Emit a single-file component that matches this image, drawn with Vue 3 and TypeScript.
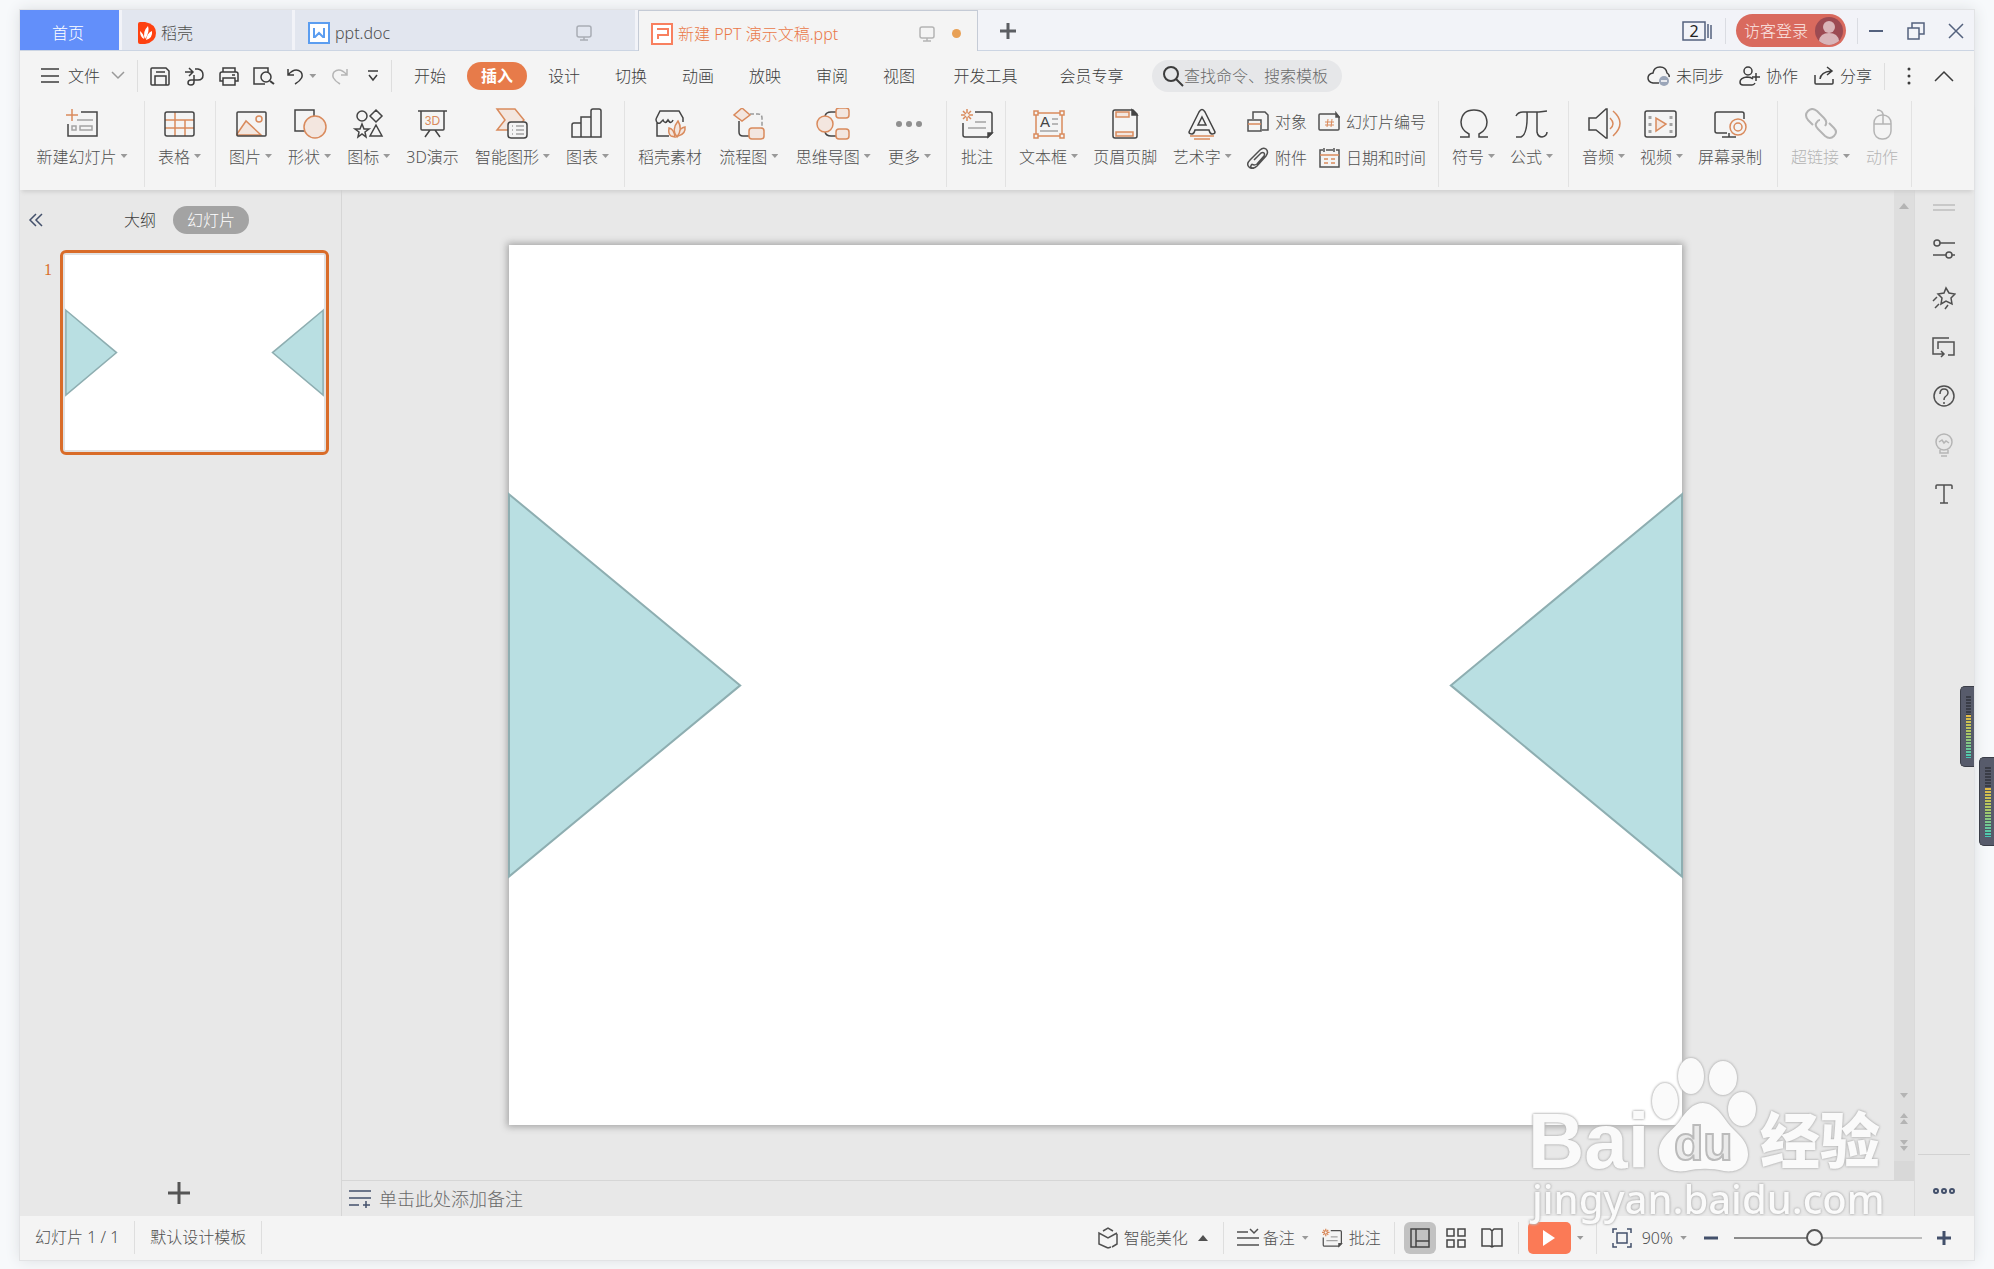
<script setup lang="ts">
import { h, ref } from 'vue'

type IconDef = [number, number, string]

const O = 'stroke="#d98a5c"'
const F = 'fill="#f3e6df"'
const G = 'stroke="#a3a3a3"'

const icons: Record<string, IconDef> = {
  newSlide: [34, 32, `<path ${O} d="M1 7h12M7 1v12"/><path d="M16 4h16v24H3V16"/><path ${G} d="M12 12h16M7 18h4v4H7zM15 18h12v4H15z"/>`],
  table: [34, 32, `<path ${O} d="M2 12h29M2 20h29M12 4v24M22 12v16"/><rect x="2" y="4" width="29" height="24" rx="2"/>`],
  picture: [34, 32, `<path ${O} ${F} d="M3 26 12 13 27 27H3z"/><circle ${O} cx="25" cy="11" r="3"/><rect x="3" y="4" width="29" height="24" rx="1"/>`],
  shape: [34, 32, `<path d="M12 23H2V2h19v8"/><circle ${O} ${F} cx="22" cy="19" r="11"/>`],
  iconSet: [34, 32, `<circle cx="10" cy="8" r="5"/><path d="m24 2 6 6-6 6-6-6zM24 17l6 11H18zM10 16l2 5h5l-4 3 1 5-4-3-4 3 1-5-4-3h5z"/>`],
  show3d: [34, 32, `<path d="M2 3h29M5 3v18q0 1 1 1h21q1 0 1-1V3M14 22l-5 7M19 22l5 7"/><text x="16.500" y="17" text-anchor="middle" font-size="12" fill="#d98a5c" stroke="none" font-family="Liberation Sans">3D</text>`],
  smart: [34, 32, `<path ${O} ${F} d="M2 1h18l9 11-9 10H2l8-10z"/><rect x="13" y="14" width="19" height="16" rx="3" fill="#f4f4f4"/><path ${G} d="M17 18h1M21 18h8M17 22h1M21 22h8M17 26h1M21 26h8"/>`],
  chart: [34, 32, `<path d="M2 29V17q0-2 2-2h7v14zM11 29V9h10v20zM21 29V3q0-2 2-2h6q2 0 2 2v26zM2 29h29"/>`],
  store: [34, 32, `<path d="M3 11 7 3h19l4 7v4M3 11q0 5 4 4l3-3q2 5 5 0 3 5 5 0M4 15v13h12"/><path ${O} ${F} d="M18 28q-3-2-2-8 5 1 6 9zM25 28q8-2 7-9-5 1-8 7z"/><path ${O} ${F} d="M24 29q-6-7 1-16 5 8-1 16z"/>`],
  flow: [34, 32, `<path d="M7 13v11q0 4 4 4h6"/><path stroke="#999" stroke-dasharray="4 2" d="M18 6h8q4 0 4 4v11"/><path ${O} ${F} d="m10 0 8 7-8 6-8-6z"/><rect ${O} ${F} x="17" y="20" width="15" height="11" rx="3"/>`],
  mind: [34, 32, `<path d="M9 8q1-4 6-4h6M9 24q1 4 6 4h6"/><circle ${O} ${F} cx="9" cy="16" r="8"/><rect ${O} ${F} x="20" y="0" width="13" height="10" rx="3"/><rect ${O} ${F} x="20" y="21" width="13" height="10" rx="3"/>`],
  more: [34, 32, `<g fill="#8f8f8f" stroke="none"><circle cx="7" cy="16" r="3"/><circle cx="17" cy="16" r="3"/><circle cx="27" cy="16" r="3"/></g>`],
  comment: [34, 32, `<path ${O} d="M7 1v4M7 9v4M1 7h4M9 7h4M3 3l3 3M11 3 8 6M3 11l3-3M11 11 8 8"/><path d="M15 4h15q2 0 2 2v19l-4 4H5q-2 0-2-2V15"/><path fill="currentColor" d="M32 25h-4v4z"/><path ${G} d="M15 14h11M8 20h18"/>`],
  textBox: [34, 32, `<path ${O} d="M4 5h26v23H4z"/><path ${O} fill="#f4f4f4" d="M2 3h4v4H2zM28 3h4v4h-4zM2 26h4v4H2zM28 26h4v4h-4z"/><text x="8" y="19" font-size="15" fill="#444" stroke="none" font-family="Liberation Sans">A</text><path ${G} d="M20 11h6M20 16h6M8 23h18"/>`],
  header: [34, 32, `<path d="M8 2h17l4 4v22q0 2-2 2H7q-2 0-2-2V4q0-2 2-2z"/><path fill="currentColor" d="M24 2v5h5z"/><path ${O} ${F} d="M8 4h13v5H8zM8 24h17v4H8z"/>`],
  wordArt: [34, 32, `<path d="M4 24 14 4q3-5 6 0l10 20q0 2-3 2-2 0-3-4H10q-1 4-3 4-3 0-3-2z"/><path d="m17 9 4 8h-8z"/><path ${O} d="M5 28h24M9 31h16"/>`],
  object: [22, 22, `<path d="M6 8V1h12l3 3v15h-6"/><path fill="#f4f4f4" d="M1 9h13v11H1z"/><path ${O} d="M1 13h13"/>`],
  slideNo: [22, 22, `<path d="M2 3h16l3 3v12q0 1-1 1H2q-1 0-1-1V4q0-1 1-1z"/><path fill="currentColor" d="M18 2v4h3z"/><path ${O} stroke-width="1" d="M10 8 9 16M14 8l-1 8M7 11h9M7 14h9"/>`],
  clip: [22, 22, `<path d="m7 13 7-7q2-1 3 0t0 3l-7 8q-3 2-5 0M5 17q-3 4 1 4 2 0 4-2l9-10q3-4 0-7-3-2-6 1L3 13q-4 4-1 7 2 2 5 1"/>`],
  calendar: [22, 22, `<path d="M5 3H2v17h19V3h-3M8 3h7M6 1v4M16 1v4"/><path ${O} d="M2 8h19M6 12h4M13 12h4M6 16h4M13 16h4"/>`],
  omega: [34, 32, `<path d="M3 29h9v-3Q4 22 4 14 5 2 17 2t13 12q0 8-8 12v3h9"/>`],
  pi: [34, 32, `<path d="M2 8q2-4 7-4h16l8-1M13 4q1 22-6 25H2M23 4v20q1 5 5 5 5-1 5-5"/>`],
  audio: [34, 32, `<path d="M2 10h7L19 1h1v29h-1L9 22H2z"/><path ${O} d="M23 10q6 6 0 11M26 3q14 12 0 25"/>`],
  video: [34, 32, `<rect x="1" y="3" width="31" height="26" rx="2"/><path ${G} stroke-width="3" stroke-dasharray="3 4" d="M6 8v17M27 8v17"/><path ${O} ${F} d="M12 10v13l10-7z"/>`],
  record: [34, 32, `<path d="M14 25H4q-2 0-2-2V6q0-2 2-2h25q2 0 2 2v5M16 25v4M9 29h14"/><circle ${O} fill="#f4f4f4" cx="25" cy="19" r="8"/><circle ${O} cx="25" cy="19" r="4"/>`],
  link: [34, 32, `<path stroke-width="2" d="M9 17 4 12Q0 7 4 3t9 0l7 7q4 4 1 8M25 15l5 5q4 4 0 8t-9 0l-7-7q-4-4-1-7 1-2 3-2"/>`],
  mouse: [34, 32, `<rect x="9" y="7" width="17" height="24" rx="8"/><path d="M9 16h17M18 16V6q-1-4-6-4"/>`],
  menu: [20, 18, `<path d="M1 2h18M1 9h18M1 15h18"/>`],
  chevDown: [14, 10, `<path d="m1 1 6 6 6-6"/>`],
  chevUp: [22, 14, `<path d="m2 12 9-9 9 9"/>`],
  save: [20, 20, `<path d="M2 2h14l3 3v13q0 1-1 1H2q-1 0-1-1V3q0-1 1-1zM5 19v-9h11v9M6 6h9"/>`],
  exportPdf: [20, 20, `<path d="M1 6h7M5 2l4 4-4 4M11 3h3q5 1 5 6t-5 5H7q-3 0-3 3 0 2 3 2 3 0 3-3V9"/>`],
  print: [20, 20, `<path d="M4 6V2h12v4M4 15H1V8q0-2 2-2h14q2 0 2 2v7h-3M4 12h12v7H4zM13 9h3"/>`],
  preview: [22, 20, `<path d="M12 18H1V2h14v4"/><circle cx="13" cy="11" r="5"/><path stroke-width="2" d="m17 15 4 3"/>`],
  undo: [18, 20, `<path d="M2 3v6h6M2 9q7-8 13-3 4 6-6 12"/>`],
  redo: [18, 20, `<path d="M16 3v6h-6M16 9Q9 1 3 6q-4 6 6 12"/>`],
  overflow: [12, 12, `<path d="M1 1h10M2 5l4 5 4-5"/>`],
  search: [22, 22, `<circle cx="9" cy="9" r="7" stroke-width="2"/><path stroke-width="2" d="m14 14 7 7"/>`],
  cloud: [24, 22, `<path d="M12 18H6q-5-1-5-5t5-5q1-6 7-6t7 6q3 2 2 4"/><circle cx="17" cy="16" r="5" fill="#9aa5b8" stroke="none"/><path stroke="#fff" d="M14 16h6"/>`],
  collab: [22, 20, `<circle cx="9" cy="5" r="4"/><path d="M14 13q-2-2-6-2-7 1-7 5 0 3 3 3h9q2 0 3-2M17 7v8M13 11h8"/>`],
  share: [22, 20, `<path d="M2 9v8q0 1 1 1h16q1 0 1-1v-4M7 13q1-7 11-8M14 1l5 4-5 4"/>`],
  dots: [6, 20, `<g fill="currentColor" stroke="none"><circle cx="3" cy="3" r="1.500"/><circle cx="3" cy="10" r="1.500"/><circle cx="3" cy="17" r="1.500"/></g>`],
  flame: [18, 22, `<path fill="#fe4110" stroke="none" d="M2 0h5q11 2 11 11T7 22H2q-2 0-2-2V2q0-2 2-2z"/><path fill="#fff" stroke="none" d="M7 17q-3-7 3-13 2 6-3 13zM6 17q-4-2-4-8 4 3 4 8zM8 18q7-2 6-9-5 2-6 9z"/>`],
  writer: [22, 22, `<rect x="1" y="1" width="20" height="20" fill="#fff" stroke="#5b9df0" stroke-width="2"/><path stroke="#5b9df0" stroke-width="2" d="M6 6v9h1l4-4 4 4h1V6"/>`],
  slides: [22, 22, `<rect x="1" y="1" width="20" height="20" fill="#fff" stroke="#f8805f" stroke-width="2"/><path stroke="#f8805f" stroke-width="2" d="M6 6h11v6H7v4"/>`],
  monitor: [16, 18, `<rect x="1" y="2" width="14" height="11" rx="2"/><path d="M8 13v3M4 16h8"/>`],
  plusBold: [18, 18, `<path stroke-width="3" d="M1 9h16M9 1v16"/>`],
  plusBig: [22, 22, `<path stroke-width="3" d="M0 11h22M11 0v22"/>`],
  stack: [32, 22, `<path d="M1 2h22v18H1zM26 4v14M29 5v14"/>`],
  avatar: [28, 28, `<circle cx="14" cy="14" r="14" fill="#9c4a52" stroke="none"/><g fill="#d9b4b8" stroke="none"><circle cx="14" cy="10" r="6"/><path d="M4 24q1-8 10-8t10 8q-10 8-20 0z"/></g>`],
  minimize: [16, 16, `<path stroke-width="2" d="M1 8h14"/>`],
  restore: [18, 18, `<path d="M1 6h11v11H1zM5 6V1h12v11h-5"/>`],
  close: [16, 16, `<path d="m1 1 14 14M15 1 1 15"/>`],
  collapse: [16, 16, `<path d="M8 2 2 8l6 6M14 2 8 8l6 6"/>`],
  grip: [22, 8, `<path stroke="#bdbdbd" d="M0 1h22M0 6h22"/>`],
  sliders: [22, 22, `<circle cx="4" cy="5" r="3"/><path d="M7 5h15M0 17h13M19 17h3"/><circle cx="16" cy="17" r="3"/>`],
  star: [24, 24, `<path d="m14 2 3 5 6 1-4 4 1 6-6-3-5 3 1-6-4-4 6-1zM5 11l-4 4M7 18l-4 4M16 19l-3 4"/>`],
  swap: [24, 22, `<path d="M17 2H1v16h11M9 15l3 3-3 3M6 13V6h16v13h-6"/>`],
  help: [22, 22, `<circle cx="11" cy="11" r="10"/><path d="M7 9q0-5 4-5t4 4q0 2-3 4-1 1-1 3M11 17v2"/>`],
  bulb: [22, 24, `<circle cx="11" cy="9" r="8"/><path d="M7 17v3h8v-3M8 23h6M6 9l3-2 2 3 2-2 3 2"/>`],
  typeT: [22, 22, `<path d="M3 6V3q0-1 1-1h14q1 0 1 1v3M11 2v18M7 20h8"/>`],
  rings: [24, 8, `<g stroke-width="2"><circle cx="4" cy="4" r="2"/><circle cx="12" cy="4" r="2"/><circle cx="20" cy="4" r="2"/></g>`],
  notes: [22, 20, `<path d="M0 2h22M0 9h22M0 16h10M14 16h7M17 12v7"/>`],
  cube: [22, 22, `<path d="m6 4 5-3 5 3M20 7v10l-5 3M11 21l-9-4V6l9 5 9-5M11 21l3-1"/>`],
  remark: [22, 20, `<path d="M0 4h11M0 10h22M0 17h22M13 1l4 4 4-4"/>`],
  viewNormal: [20, 20, `<path d="M1 1h18v18H1zM6 1v18M6 13h13"/>`],
  viewGrid: [20, 20, `<path d="M1 1h7v7H1zM12 1h7v7h-7zM1 12h7v7H1zM12 12h7v7h-7z"/>`],
  viewBook: [22, 20, `<path d="M1 1h8l2 2 2-2h8v17h-8l-2 1-2-1H1zM11 3v16"/>`],
  play: [14, 18, `<path fill="#fff" stroke="none" d="M1 1v16l12-8z"/>`],
  fit: [20, 20, `<path d="M1 5V1h4M15 1h4v4M19 15v4h-4M5 19H1v-4M5 5h10v10H5z"/>`],
  minusBold: [14, 14, `<path stroke-width="3" d="M0 7h14"/>`],
  plusZoom: [14, 14, `<path stroke-width="3" d="M0 7h14M7 0v14"/>`],
  triUp: [10, 8, `<path fill="currentColor" stroke="none" d="M0 7h10L5 1z"/>`],
  dblUp: [10, 12, `<path fill="currentColor" stroke="none" d="M1 5h8L5 0zM1 11h8L5 6z"/>`],
  dblDown: [10, 12, `<path fill="currentColor" stroke="none" d="M1 1h8L5 6zM1 7h8l-4 5z"/>`],
  triDown: [10, 6, `<path fill="currentColor" stroke="none" d="M1 0h8L5 5z"/>`],
}

const Icon = (props: { name: string }) => {
  const [w, ht, body] = icons[props.name]
  return h('svg', {
    width: w, height: ht, viewBox: `0 0 ${w} ${ht}`,
    fill: 'none', stroke: 'currentColor', 'stroke-width': 1.5,
    'aria-hidden': 'true', innerHTML: body,
  })
}
Icon.props = ['name']

interface Tool { icon: string; label: string; menu?: boolean }
interface Group { id: string; tools: Tool[]; small?: Tool[]; disabled?: boolean }

const groups: Group[] = [
  { id: 'new', tools: [{ icon: 'newSlide', label: '新建幻灯片', menu: true }] },
  { id: 'table', tools: [{ icon: 'table', label: '表格', menu: true }] },
  { id: 'art', tools: [
    { icon: 'picture', label: '图片', menu: true },
    { icon: 'shape', label: '形状', menu: true },
    { icon: 'iconSet', label: '图标', menu: true },
    { icon: 'show3d', label: '3D演示' },
    { icon: 'smart', label: '智能图形', menu: true },
    { icon: 'chart', label: '图表', menu: true },
  ] },
  { id: 'docer', tools: [
    { icon: 'store', label: '稻壳素材' },
    { icon: 'flow', label: '流程图', menu: true },
    { icon: 'mind', label: '思维导图', menu: true },
    { icon: 'more', label: '更多', menu: true },
  ] },
  { id: 'note', tools: [{ icon: 'comment', label: '批注' }] },
  { id: 'text', tools: [
    { icon: 'textBox', label: '文本框', menu: true },
    { icon: 'header', label: '页眉页脚' },
    { icon: 'wordArt', label: '艺术字', menu: true },
  ], small: [
    { icon: 'object', label: '对象' },
    { icon: 'slideNo', label: '幻灯片编号' },
    { icon: 'clip', label: '附件' },
    { icon: 'calendar', label: '日期和时间' },
  ] },
  { id: 'symbol', tools: [
    { icon: 'omega', label: '符号', menu: true },
    { icon: 'pi', label: '公式', menu: true },
  ] },
  { id: 'media', tools: [
    { icon: 'audio', label: '音频', menu: true },
    { icon: 'video', label: '视频', menu: true },
    { icon: 'record', label: '屏幕录制' },
  ] },
  { id: 'links', disabled: true, tools: [
    { icon: 'link', label: '超链接', menu: true },
    { icon: 'mouse', label: '动作' },
  ] },
]

const menus = ['开始', '插入', '设计', '切换', '动画', '放映', '审阅', '视图', '开发工具', '会员专享']
const activeMenu = ref('插入')
const rail = ['sliders', 'star', 'swap', 'help', 'bulb', 'typeT']
const zoom = ref(42)
</script>

<template>
  <div class="desktop">
    <div class="window">
      <header class="titlebar">
        <nav class="tabs">
          <button class="tab home">首页</button>
          <button class="tab docer"><Icon name="flame" />稻壳</button>
          <button class="tab doc"><Icon name="writer" />ppt.doc<Icon name="monitor" class="mon" /></button>
          <button class="tab doc active"><Icon name="slides" />新建 PPT 演示文稿.ppt<Icon name="monitor" class="mon" /><i class="dirty"></i></button>
          <button class="add" aria-label="新建"><Icon name="plusBold" /></button>
        </nav>
        <div class="sys">
          <button class="stack" aria-label="窗口"><Icon name="stack" /><b>2</b></button>
          <i class="sep"></i>
          <button class="login">访客登录<Icon name="avatar" /></button>
          <i class="sep"></i>
          <button aria-label="最小化"><Icon name="minimize" /></button>
          <button aria-label="还原"><Icon name="restore" /></button>
          <button aria-label="关闭"><Icon name="close" /></button>
        </div>
      </header>

      <div class="menubar">
        <button class="file"><Icon name="menu" />文件<Icon name="chevDown" class="faint" /></button>
        <div class="quick">
          <button aria-label="保存"><Icon name="save" /></button>
          <button aria-label="输出"><Icon name="exportPdf" /></button>
          <button aria-label="打印"><Icon name="print" /></button>
          <button aria-label="打印预览"><Icon name="preview" /></button>
          <button class="undo" aria-label="撤销"><Icon name="undo" /><i class="caret"></i></button>
          <button class="light" aria-label="恢复"><Icon name="redo" /></button>
          <button class="last" aria-label="更多命令"><Icon name="overflow" /></button>
        </div>
        <nav class="menus">
          <button v-for="m in menus" :key="m" :class="{ on: m === activeMenu, wide: m.length > 2 }" @click="activeMenu = m">{{ m }}</button>
        </nav>
        <label class="search"><Icon name="search" /><input type="text" placeholder="查找命令、搜索模板" aria-label="查找命令" /></label>
        <div class="account">
          <button><Icon name="cloud" />未同步</button>
          <button><Icon name="collab" />协作</button>
          <button><Icon name="share" />分享</button>
          <i class="line"></i>
          <button class="kebab" aria-label="更多"><Icon name="dots" /></button>
          <button aria-label="收起"><Icon name="chevUp" /></button>
        </div>
      </div>

      <div class="ribbon">
        <section v-for="g in groups" :key="g.id" class="group" :class="['g-' + g.id, { off: g.disabled }]">
          <button v-for="t in g.tools" :key="t.label" class="tool" :disabled="g.disabled">
            <Icon :name="t.icon" />
            <span>{{ t.label }}<i v-if="t.menu" class="caret"></i></span>
          </button>
          <div v-if="g.small" class="small">
            <button v-for="t in g.small" :key="t.label"><Icon :name="t.icon" />{{ t.label }}</button>
          </div>
        </section>
      </div>

      <main class="body">
        <aside class="side">
          <div class="side-head">
            <button aria-label="收起"><Icon name="collapse" class="navy" /></button>
            <button class="outline">大纲</button>
            <button class="pill">幻灯片</button>
          </div>
          <div class="thumb-row">
            <span class="num">1</span>
            <button class="thumb" aria-label="幻灯片 1">
              <svg viewBox="0 0 1172 879" preserveAspectRatio="none">
                <path d="M4 249 233 440 4 631zM1168 249 939 440l229 191z" />
              </svg>
            </button>
          </div>
          <button class="add-slide" aria-label="新建幻灯片"><Icon name="plusBig" /></button>
        </aside>

        <div class="center">
          <div class="stage">
            <div class="canvas">
              <svg class="slide" viewBox="0 0 1172 879" preserveAspectRatio="none">
                <path d="M0 249 231 440 0 631zM1172 249 941 440l231 191z" />
              </svg>
            </div>
            <div class="scroll">
              <Icon name="triUp" />
              <Icon name="triDown" class="push" />
              <Icon name="dblUp" />
              <Icon name="dblDown" />
              <i class="foot"></i>
            </div>
          </div>
          <label class="notes"><Icon name="notes" class="navy" /><input type="text" placeholder="单击此处添加备注" aria-label="备注" /></label>
        </div>

        <aside class="rail">
          <Icon name="grip" />
          <button v-for="r in rail" :key="r" :class="{ light: r === 'bulb' }" :aria-label="r"><Icon :name="r" /></button>
          <button class="rail-more" aria-label="更多"><Icon name="rings" class="navy" /></button>
        </aside>
      </main>

      <footer class="status">
        <span class="cell">幻灯片 1 / 1</span>
        <span class="cell">默认设计模板</span>
        <div class="tools">
          <button class="beauty"><Icon name="cube" />智能美化<Icon name="triUp" class="up" /></button>
          <i class="line"></i>
          <button class="remark"><Icon name="remark" />备注<i class="caret"></i></button>
          <button class="annot"><svg class="mini" width="22" height="20" viewBox="0 0 34 32" fill="none" stroke="currentColor" stroke-width="2" v-html="icons.comment[2]"></svg>批注</button>
          <i class="line"></i>
          <button class="view on" aria-label="普通视图"><Icon name="viewNormal" /></button>
          <button class="view" aria-label="幻灯片浏览"><Icon name="viewGrid" /></button>
          <button class="view" aria-label="阅读视图"><Icon name="viewBook" /></button>
          <i class="line"></i>
          <button class="play" aria-label="放映"><Icon name="play" /></button>
          <i class="caret"></i>
          <i class="line"></i>
          <button class="fit" aria-label="适应窗口"><Icon name="fit" class="navy" /></button>
          <button class="pct">90%<i class="caret"></i></button>
          <button class="navy" aria-label="缩小"><Icon name="minusBold" /></button>
          <input v-model.number="zoom" class="range" type="range" min="0" max="100" aria-label="缩放" />
          <button class="navy" aria-label="放大"><Icon name="plusZoom" /></button>
        </div>
      </footer>
      <div class="meter inner"><i class="idle"></i><i class="level"></i></div>
    </div>
    <div class="meter outer"><i class="idle"></i><i class="level"></i></div>

    <svg class="mark" width="364" height="190" viewBox="0 0 364 190" aria-hidden="true">
      <g fill="#fafafa">
        <text class="bai" x="1" y="116" font-size="78">Bai</text>
        <path d="M176 51c10 0 17 9 24 19 8 11 21 17 21 32 0 14-13 19-24 17-13-3-25-3-38 0-14 2-27-3-27-19 0-14 12-20 20-30 7-11 14-19 24-19z" />
        <ellipse cx="138" cy="49" rx="13" ry="18" />
        <ellipse cx="164" cy="24" rx="13" ry="18" />
        <ellipse cx="196" cy="26" rx="14" ry="17" />
        <ellipse cx="215" cy="57" rx="14" ry="17" />
        <text class="jy" x="233" y="111" font-size="60">经验</text>
        <text class="url" x="5" y="162" font-size="40">jingyan.baidu.com</text>
      </g>
      <text class="du" x="147" y="108" font-size="48">du</text>
    </svg>
  </div>
</template>

<style>
html, body { margin: 0; background: #f7f9fb; }
</style>

<style scoped>
.desktop {
  position: relative;
  box-sizing: border-box;
  min-height: 100vh;
  padding: 10px 20px;
  display: flex;
  overflow: hidden;
  background: #f7f9fb;
  color: #505050;
  font: 300 16px/24px "Noto Sans", "Noto Sans CJK SC", sans-serif;
}
.desktop * { box-sizing: border-box; }
button, input { font: inherit; color: inherit; border: 0; background: none; padding: 0; margin: 0; outline: 0; }
button { display: flex; align-items: center; white-space: nowrap; flex: none; }
svg { flex: none; display: block; }
i { flex: none; }
.window {
  position: relative;
  flex: 1;
  min-width: 0;
  display: flex;
  flex-direction: column;
  background: #f4f4f4;
  box-shadow: 0 0 0 1px #e2e3e5, 0 0 14px #d9dcdf;
}
.caret {
  display: inline-block;
  width: 7px;
  height: 4px;
  background: #999;
  clip-path: polygon(0 0, 100% 0, 50% 100%);
}
.navy { color: #43506b; }
.light { color: #b5b5b5; }
.faint { color: #999; }
.line { width: 1px; height: 32px; background: #dedede; }

.titlebar { display: flex; height: 41px; background: #f2f3f8; border-bottom: 1px solid #ccd5e3; }
.tabs { display: flex; flex: 1; gap: 3px; height: 41px; }
.tab { height: 40px; background: #e2e6ef; gap: 5px; padding: 5px 16px 0; color: #505050; }
.home { width: 99px; justify-content: center; background: #628ffa; color: #fff; padding: 5px 3px 0 0; }
.docer { width: 170px; }
.doc { width: 340px; padding: 5px 12px 0 13px; }
.doc .mon { margin-left: auto; margin-right: 31px; color: #a9adb5; }
.doc.active { height: 41px; background: #f4f4f4; color: #ea7848; border: 1px solid #c5cbd6; border-bottom: 0; padding-left: 12px; }
.doc.active .mon { margin-right: 12px; color: #b4b4b4; }
.dirty { width: 9px; height: 9px; border-radius: 50%; background: #e8a055; margin-right: 4px; }
.add { width: 54px; height: 42px; justify-content: center; color: #5c5e63; }
.sys { display: flex; align-items: center; height: 41px; color: #54617e; padding-right: 10px; gap: 23px; }
.sys .sep { width: 1px; height: 26px; background: #dadce2; margin: 0 -13px 0 -12px; }
.stack { position: relative; }
.stack b { position: absolute; left: 0; top: -1px; width: 24px; text-align: center; color: #222; font-weight: 400; }
.login { height: 33px; border-radius: 17px; background: #d96a5e; color: #fbe9e7; padding: 0 3px 0 8px; gap: 7px; }

.menubar { display: flex; align-items: center; height: 50px; color: #3c3c3c; }
.file { width: 118px; height: 32px; padding-left: 20px; gap: 8px; border-right: 1px solid #dedede; }
.file svg:last-child { margin-left: 3px; }
.quick { display: flex; align-items: center; width: 254px; height: 32px; padding: 0 12px 0 12px; justify-content: space-between; border-right: 1px solid #dedede; }
.quick .undo { gap: 5px; margin-left: -3px; }
.quick .last { margin-left: 4px; }
.menus { display: flex; align-items: center; margin-left: 8px; gap: 7px; }
.menus button { width: 60px; height: 28px; border-radius: 14px; justify-content: center; }
.menus .wide { width: 99px; }
.menus .on { background: #e77b4a; color: #fff; font-weight: 700; }
.search { display: flex; align-items: center; width: 190px; height: 32px; margin-left: 11px; padding-left: 10px; border-radius: 16px; background: #e6e7e9; }
.search input { width: 150px; }
input::placeholder { color: #6a6a6a; opacity: 1; }
.account { display: flex; align-items: center; margin-left: auto; padding-right: 19px; gap: 15px; }
.account button { gap: 5px; }
.account .line { height: 27px; margin-left: -3px; }
.account .kebab { margin: 0 6px; }

.ribbon { display: flex; height: 89px; box-shadow: 0 4px 4px -2px #cfcfcf; position: relative; padding-bottom: 3px; }
.group { display: flex; justify-content: space-between; padding: 7px 15px 0 13px; border-right: 1px solid #e2e2e2; flex: none; }
.g-new { width: 125px; padding-left: 15px; }
.g-table { width: 71px; }
.g-art { width: 409px; }
.g-docer { width: 322px; }
.g-note { width: 59px; }
.g-text { width: 433px; padding-right: 10px; }
.g-symbol { width: 130px; }
.g-media { width: 209px; }
.g-links { width: 134px; padding-right: 12px; }
.tool { flex-direction: column; gap: 5px; height: 61px; color: #444; }
.tool span { color: #505050; line-height: 24px; }
.group .tool:only-child { margin: 0 auto; }
.tool .caret { margin-left: 4px; vertical-align: 5px; }
.off .tool, .off .tool span { color: #b4b4b4; }
.small { display: grid; grid-template-columns: 59px 110px; gap: 8px 12px; align-content: start; }
.small button { gap: 6px; height: 28px; color: #505050; }

.body { flex: 1; display: flex; min-height: 0; background: #e8e8e8; }
.side { width: 322px; flex: none; display: flex; flex-direction: column; border-right: 1px solid #d6d6d6; }
.side-head { display: flex; align-items: center; height: 28px; margin-top: 16px; padding-left: 8px; color: #3c3c3c; }
.outline { margin-left: 80px; }
.pill { width: 76px; height: 28px; margin-left: 17px; justify-content: center; border-radius: 14px; background: #a3a3a3; color: #fff; }
.thumb-row { display: flex; margin-top: 16px; padding: 0 12px 0 24px; }
.num { width: 16px; padding-top: 8px; color: #d96c29; font-family: "Liberation Serif", serif; font-size: 16px; }
.thumb { flex: 1; height: 205px; padding: 2px; border: 3px solid #d96c29; border-radius: 6px; background: #e2e2e2; }
.thumb svg, .slide { width: 100%; height: 100%; background: #fff; fill: #b9dfe2; stroke: #8eaeb1; stroke-width: 2; overflow: visible; }
.thumb svg { stroke-width: 7; }
.add-slide { margin: auto auto 12px 148px; color: #555; }
.center { flex: 1; min-width: 0; display: flex; flex-direction: column; }
.stage { flex: 1; display: flex; min-height: 0; }
.canvas { flex: 1; min-width: 0; padding: 55px 212px 55px 167px; display: flex; }
.slide { box-shadow: 0 0 7px 2px #a6a6a6; }
.scroll { width: 20px; background: #dedede; display: flex; flex-direction: column; align-items: center; gap: 14px; padding-top: 12px; color: #b4b4b4; }
.push { margin-top: auto; }
.foot { width: 20px; height: 19px; margin-top: -4px; background: #d8d8d8; }
.notes { display: flex; align-items: center; height: 36px; padding: 2px 0 0 7px; gap: 8px; border-top: 1px solid #d6d6d6; font-size: 18px; }
.notes input { flex: 1; }
.rail { width: 60px; flex: none; display: flex; flex-direction: column; align-items: center; gap: 25px; padding: 14px 1px 0 0; border-left: 1px solid #dadada; color: #505050; }
.rail button { width: 24px; height: 24px; justify-content: center; }
.rail .rail-more { width: 52px; height: 62px; margin-top: auto; padding-top: 12px; border-top: 1px solid #d2d2d2; }

.status { display: flex; align-items: center; height: 44px; color: #505050; }
.cell { height: 33px; line-height: 33px; padding: 0 15px; border-right: 1px solid #dedede; }
.tools { margin-left: auto; display: flex; align-items: center; padding-right: 23px; }
.beauty { gap: 5px; }
.up { margin: 0 15px 0 5px; }
.remark { margin-left: 13px; gap: 4px; }
.remark .caret { margin-left: 3px; }
.annot { margin: 0 13px 0 12px; gap: 6px; }
.view { width: 32px; height: 32px; margin-left: 9px; justify-content: center; color: #444; }
.view.on { background: #c2c2c2; border-radius: 6px; }
.view + .view { margin-left: 4px; }
.view + .line { margin-left: 10px; }
.play { width: 43px; height: 32px; margin: 0 6px 0 9px; justify-content: center; border-radius: 5px; background: #fb7a56; }
.play + .caret { margin-right: 12px; }
.fit { margin: 0 10px 0 15px; }
.pct { gap: 7px; margin-right: 17px; }
.range { width: 188px; height: 20px; margin: 0 15px 0 16px; appearance: none; background: linear-gradient(90deg, #8a8a8a 43%, #bcbcbc 43%) center / 100% 2px no-repeat; }
.range::-webkit-slider-thumb { appearance: none; width: 17px; height: 17px; border: 2px solid #555; border-radius: 50%; background: #f4f4f4; }

.meter { position: absolute; width: 15px; border: 1px solid #3a3d47; border-right: 0; border-radius: 5px 0 0 5px; background: #575b6b; padding: 9px 3px 8px 5px; display: flex; flex-direction: column; }
.inner { right: 0; top: 676px; height: 81px; width: 14px; }
.outer { right: 0; top: 757px; height: 89px; }
.idle { flex: 3; background: repeating-linear-gradient(#3a3d47 0 2px, #575b6b 2px 3px); }
.level { flex: 7; background: repeating-linear-gradient(transparent 0 2px, #4c5a60 2px 3px), linear-gradient(#e5bb45, #a9c666 45%, #45c8b8); }

.mark { position: absolute; right: 103px; bottom: 28px; filter: drop-shadow(0 0 1px #aaa) drop-shadow(0 0 1px #ccc); pointer-events: none; }
.bai, .du { font-family: "Liberation Sans", sans-serif; font-weight: 700; }
.jy { font-family: "Noto Sans CJK SC", sans-serif; font-weight: 900; }
.url { font-family: "Noto Sans", sans-serif; font-weight: 500; }
.du { fill: #eaeaea; stroke: #bbb; stroke-width: 2; }
</style>
